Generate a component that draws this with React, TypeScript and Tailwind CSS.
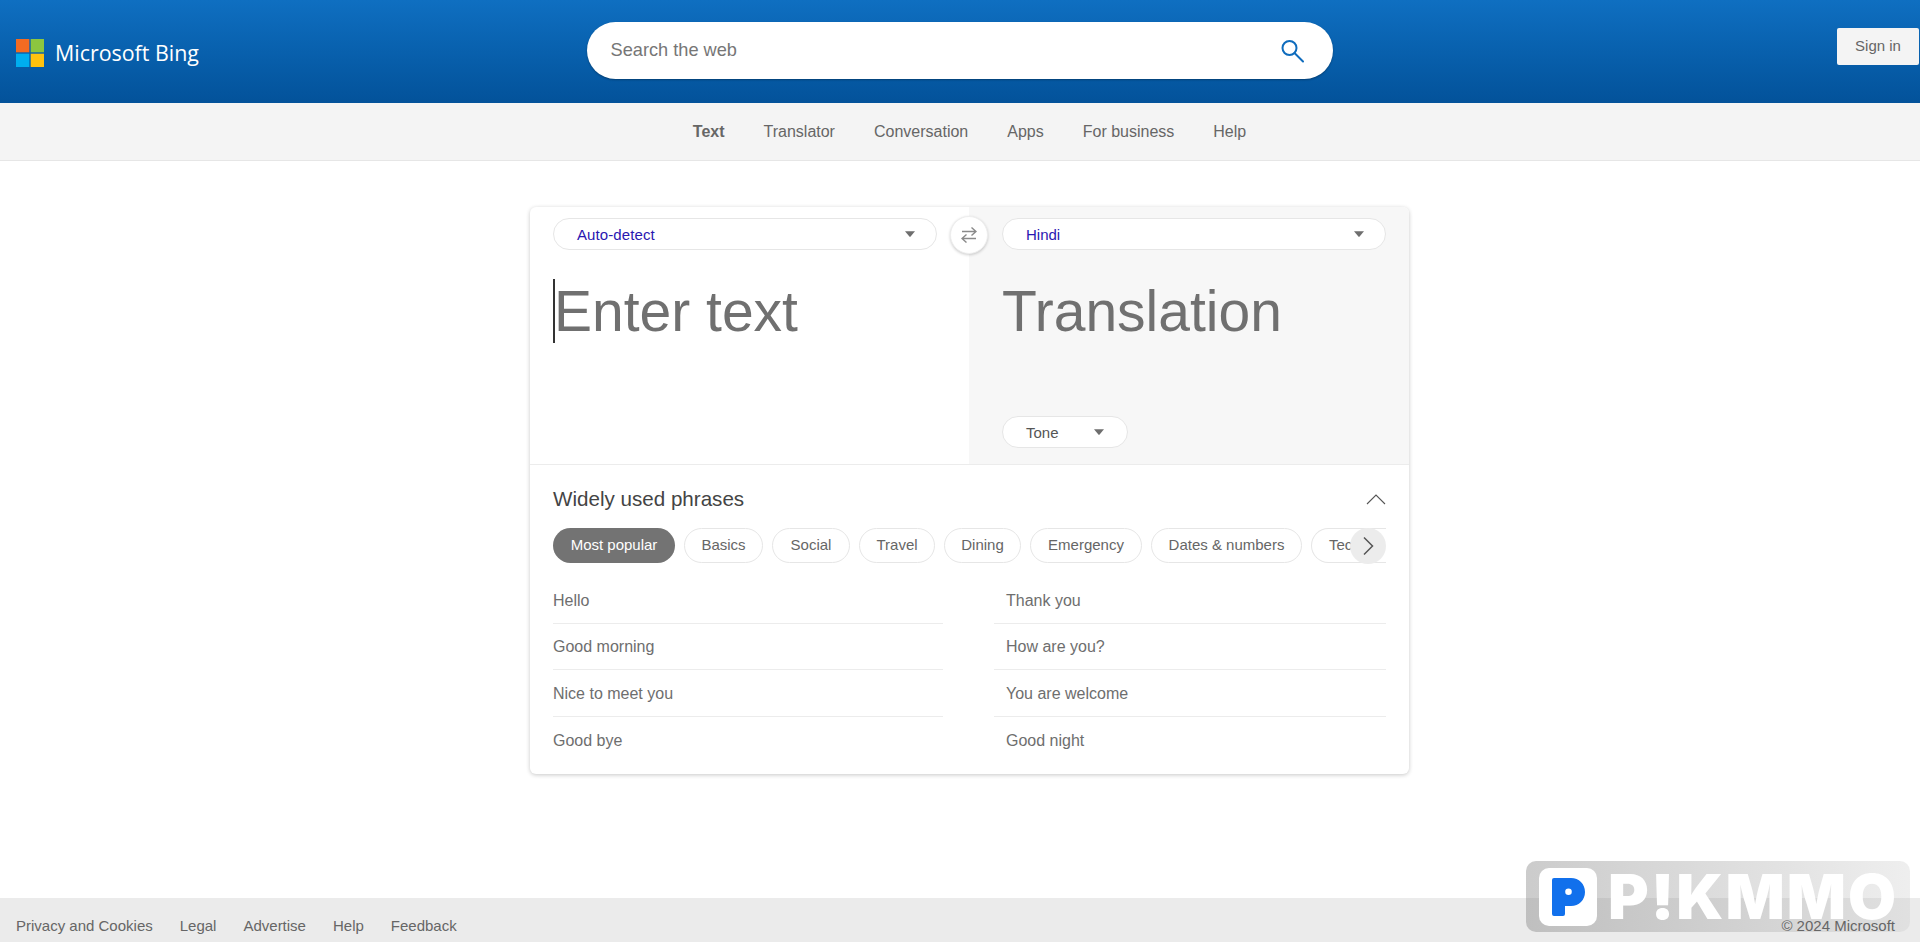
import React from "react";

const Caret = () => (
  <svg width="12" height="8" viewBox="0 0 12 8" className="shrink-0">
    <path d="M1 1.2h10L6.6 6.6a.8.8 0 0 1-1.2 0z" fill="#6e6e6e" />
  </svg>
);

const Select = ({ label, cls, color }: { label: string; cls: string; color: string }) => (
  <div className={`flex h-[32px] items-center justify-between rounded-full border border-[#e6e6e6] bg-white pl-[23px] ${cls}`}>
    <span className={`text-[15px] leading-none ${color}`}>{label}</span>
    <Caret />
  </div>
);

const chips = [
  ["Basics", "w-[79px]"],
  ["Social", "w-[78px]"],
  ["Travel", "w-[76px]"],
  ["Dining", "w-[77px]"],
  ["Emergency", "w-[112px]"],
  ["Dates & numbers", "w-[151px]"],
];

const Phrase = ({ text, right, last }: { text: string; right?: boolean; last?: boolean }) => (
  <div className={`flex h-[46.5px] items-center pt-[2px] text-[16px] text-[#6e6e6e] ${right ? "pl-[12px]" : ""} ${last ? "" : "border-b border-[#ececec]"}`}>
    {text}
  </div>
);

export default function App() {
  return (
    <div className="relative flex h-screen flex-col overflow-hidden bg-white font-['Liberation_Sans',Arial,sans-serif]">
      <header className="flex h-[103px] shrink-0 items-start justify-between bg-gradient-to-b from-[#0f6fc1] to-[#03529a] pl-[16px] pr-[1px]">
        <div className="mt-[39px] flex w-[571px] items-center gap-[11px]">
          <svg width="28" height="28" viewBox="0 0 28 28" className="shrink-0">
            <rect x="0" y="0" width="13.3" height="13.3" fill="#f36b21" />
            <rect x="14.7" y="0" width="13.3" height="13.3" fill="#8cc63f" />
            <rect x="0" y="14.7" width="13.3" height="13.3" fill="#00aeef" />
            <rect x="14.7" y="14.7" width="13.3" height="13.3" fill="#ffc20e" />
          </svg>
          <span className="font-['Open_Sans',sans-serif] text-[21.4px] leading-none text-white">Microsoft Bing</span>
        </div>
        <div className="mt-[22px] flex h-[57px] w-[747px] items-center justify-between rounded-full bg-white pl-[24px] pr-[29px] shadow-[0_1px_2px_rgba(0,0,0,0.3)]">
          <span className="pt-[1px] text-[18.2px] text-[#767676]">Search the web</span>
          <svg width="24" height="24" viewBox="0 0 24 24" fill="none" stroke="#0f6cbd" strokeWidth="2">
            <circle cx="9.500" cy="9" r="7" />
            <path d="m14.500 14 8.500 8.500" strokeLinecap="round" />
          </svg>
        </div>
        <div className="ml-[504px] mt-[28px] flex h-[37px] w-[82px] shrink-0 items-center justify-center rounded-[2px] bg-[#f4f4f4] text-[15px] text-[#666666]">Sign in</div>
      </header>

      <nav className="flex h-[58px] shrink-0 items-center justify-center gap-[39px] border-b border-[#e6e6e6] bg-[#f4f4f4] pl-[19px] text-[16px] text-[#666666]">
        <span className="font-bold">Text</span>
        <span>Translator</span>
        <span>Conversation</span>
        <span>Apps</span>
        <span>For business</span>
        <span>Help</span>
      </nav>

      <main className="flex flex-1 justify-center pl-[19px] pt-[46px]">
        <section className="relative h-[567px] w-[879px] rounded-[6px] bg-white shadow-[0_1px_4px_rgba(0,0,0,0.22)]">
          <div className="flex h-[258px] border-b border-[#ececec]">
            <div className="w-[439px] pl-[23px] pt-[11px]">
              <Select label="Auto-detect" cls="w-[384px] pr-[20px]" color="text-[#2a17b1] tracking-[0.1px]" />
              <div className="relative mt-[29px] pl-[1px] text-[57px] leading-[64px] text-[#707070]">
                <span className="absolute left-0 top-0 h-[64px] w-[1.5px] bg-[#333333]" />
                Enter text
              </div>
            </div>
            <div className="flex w-[440px] flex-col rounded-tr-[6px] bg-[#f7f7f7] pl-[33px] pr-[23px] pt-[11px]">
              <Select label="Hindi" cls="w-[384px] pr-[20px]" color="text-[#2a17b1]" />
              <div className="mt-[29px] text-[57px] leading-[64px] text-[#707070]">Translation</div>
              <div className="mb-[16px] mt-auto">
                <Select label="Tone" cls="w-[126px] pr-[22px]" color="text-[#555555]" />
              </div>
            </div>
          </div>

          <div className="absolute left-[420px] top-[9px] flex h-[38px] w-[38px] items-center justify-center rounded-full border border-[#eeeeee] bg-white shadow-[0_1px_3px_rgba(0,0,0,0.2)]">
            <svg width="16" height="16" viewBox="0 0 16 16" fill="none" stroke="#8a8a8a" strokeWidth="1.4">
              <path d="M1 4.500h14M10.500 0.500 15 4.500l-4.500 4M15 11.500H1M5.500 7.500 1 11.500l4.500 4" />
            </svg>
          </div>

          <div className="pl-[23px] pr-[23px] pt-[20px]">
            <div className="flex h-[28px] items-center justify-between">
              <span className="text-[20.6px] text-[#444444]">Widely used phrases</span>
              <svg width="20" height="12" viewBox="0 0 20 12" fill="none" stroke="#555555" strokeWidth="1.1">
                <path d="M1 11 10 2l9 9" />
              </svg>
            </div>
            <div className="relative mt-[15px] flex h-[36px] w-[833px] gap-[9px] overflow-hidden">
              <div className="flex h-[35px] w-[122px] shrink-0 items-center justify-center rounded-full bg-[#737373] text-[15px] text-white">Most popular</div>
              {chips.map(([t, w]) => (
                <div key={t} className={`flex h-[35px] shrink-0 items-center justify-center rounded-full border border-[#e6e6e6] bg-white text-[15px] text-[#666666] ${w}`}>{t}</div>
              ))}
              <div className="flex h-[35px] w-[75px] shrink-0 items-center overflow-hidden rounded-l-full border border-r-0 border-[#e6e6e6] bg-white pl-[17px] text-[15px] text-[#666666]">Tec</div>
              <div className="absolute right-0 top-0 flex h-[36px] w-[36px] items-center justify-center rounded-full bg-[#ececec]">
                <svg width="12" height="20" viewBox="0 0 12 20" fill="none" stroke="#555555" strokeWidth="1.5">
                  <path d="m2 1.500 8.500 8.500L2 18.500" />
                </svg>
              </div>
            </div>
            <div className="mt-[13px] flex justify-between">
              <div className="w-[390px]">
                <Phrase text="Hello" />
                <Phrase text="Good morning" />
                <Phrase text="Nice to meet you" />
                <Phrase text="Good bye" last />
              </div>
              <div className="w-[392px]">
                <Phrase text="Thank you" right />
                <Phrase text="How are you?" right />
                <Phrase text="You are welcome" right />
                <Phrase text="Good night" right last />
              </div>
            </div>
          </div>
        </section>
      </main>

      <footer className="flex h-[44px] shrink-0 items-center justify-between bg-[#ebebeb] pl-[16px] pr-[25px] pt-[12px] text-[15px] text-[#666666]">
        <div className="flex gap-[27px]">
          <span>Privacy and Cookies</span>
          <span>Legal</span>
          <span>Advertise</span>
          <span>Help</span>
          <span>Feedback</span>
        </div>
        <span className="relative z-10">© 2024 Microsoft</span>
      </footer>

      <div className="absolute bottom-[10px] right-[10px] flex h-[71px] w-[384px] items-center rounded-[10px] bg-gradient-to-r from-[rgba(120,120,120,0.38)] to-[rgba(200,200,200,0.3)] pl-[13px]">
        <div className="flex h-[58px] w-[58px] shrink-0 items-center justify-center rounded-[10px] bg-white">
          <svg width="34" height="38" viewBox="0 0 34 38">
            <path fillRule="evenodd" fill="#1170ec" d="M3 0h17c8 0 14 6 14 14s-6 14-14 14h-6v8a2 2 0 0 1-2 2H3a2 2 0 0 1-2-2V2a2 2 0 0 1 2-2zm14.500 10.500a3.300 3.300 0 1 0 0 6.600 3.300 3.300 0 0 0 0-6.600z" />
          </svg>
        </div>
        <span className="ml-[11px] font-['Inter',sans-serif] text-[62px] font-black leading-none tracking-[2px] text-white">P!KMMO</span>
      </div>
    </div>
  );
}
